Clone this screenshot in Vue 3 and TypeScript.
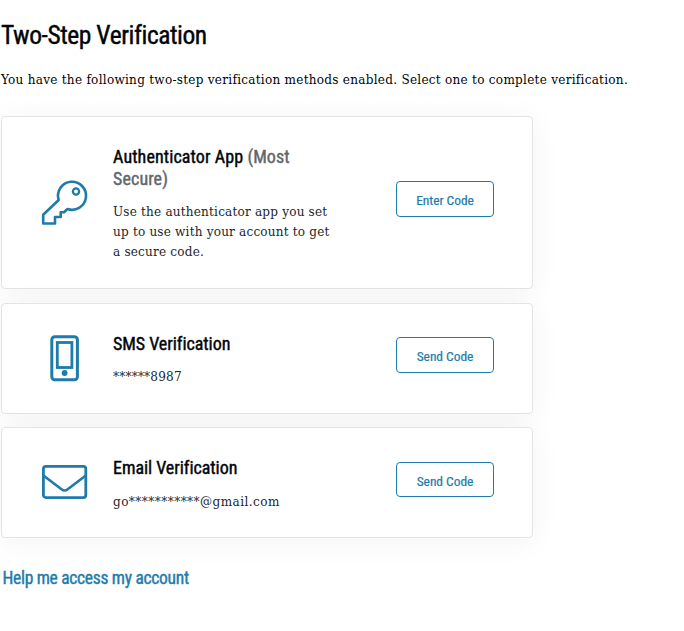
<script setup lang="ts">
interface Method {
  id: string
  title: string
  note?: string
  detail: string
  action: string
}

const methods: Method[] = [
  {
    id: 'key',
    title: 'Authenticator App',
    note: '(Most Secure)',
    detail: 'Use the authenticator app you set up to use with your account to get a secure code.',
    action: 'Enter Code',
  },
  { id: 'sms', title: 'SMS Verification', detail: '******8987', action: 'Send Code' },
  { id: 'email', title: 'Email Verification', detail: 'go***********@gmail.com', action: 'Send Code' },
]
</script>

<template>
  <main class="page">
    <h1>Two-Step Verification</h1>
    <p class="intro">You have the following two-step verification methods enabled. Select one to complete verification.</p>
    <section class="methods">
      <article v-for="m in methods" :key="m.id" class="card" :class="m.id">
        <svg class="icon" viewBox="0 0 48 48" fill="none" stroke="#1f7ba9" stroke-width="3" stroke-linejoin="round">
          <template v-if="m.id === 'key'">
            <path d="M17.700 21A14 14 0 1 1 26.500 30L23 33.300H19.700V38H14V44.500H2.200V35.800Z" stroke-width="2.600" />
            <circle cx="35" cy="12.500" r="3.100" stroke-width="2.300" />
          </template>
          <template v-else-if="m.id === 'sms'">
            <rect x="10.800" y="1.700" width="25.600" height="43" rx="3" />
            <rect x="16.300" y="7.500" width="14.600" height="25" stroke-width="2.800" stroke-linejoin="miter" />
            <circle cx="23.600" cy="38" r="2.900" fill="#1f7ba9" stroke="none" />
          </template>
          <template v-else>
            <rect x="2.400" y="7.400" width="42.400" height="31.200" rx="2.500" stroke-width="2.800" />
            <path d="M2.400 16.500L20.500 30.300Q23.600 32.700 26.700 30.300L44.800 16.500" stroke-width="2.600" />
          </template>
        </svg>
        <div class="copy">
          <h2>{{ m.title }} <span v-if="m.note">{{ m.note }}</span></h2>
          <p>{{ m.detail }}</p>
        </div>
        <button type="button">{{ m.action }}</button>
      </article>
    </section>
    <a class="help">Help me access my account</a>
  </main>
</template>

<style>
body {
  background: #fff;
}
</style>

<style scoped>
.page {
  box-sizing: border-box;
  height: 631px;
  padding: 18px 0 0 1px;
  overflow: hidden;
  color: #000508;
  font-family: "DejaVu Serif Condensed", "DejaVu Serif", serif;
  font-stretch: condensed;
}
h1, h2, button, .help {
  font-family: "Roboto", sans-serif;
  font-stretch: condensed;
  font-weight: 400;
  -webkit-text-stroke: 0.4px currentColor;
}
h1 {
  margin: 0;
  font-size: 25.5px;
  line-height: 34px;
  letter-spacing: -0.45px;
}
.intro {
  margin: 18px 0 26px;
  font-size: 13.4px;
  line-height: 20px;
  letter-spacing: 0.27px;
  white-space: nowrap;
}
.methods {
  display: flex;
  flex-direction: column;
  gap: 14px;
  width: 532px;
}
.card {
  box-sizing: border-box;
  display: grid;
  grid-template-columns: 48px 1fr 98px;
  column-gap: 24px;
  align-items: center;
  height: 111px;
  padding: 0 38px 0 39px;
  border: 1px solid #e4e4e4;
  border-radius: 4px;
  background: #fff;
  box-shadow: 0 4px 30px rgba(0, 0, 0, 0.05);
}
.card.key {
  height: 173px;
}
.card.email {
  margin-top: -1px;
}
.icon {
  width: 48px;
  height: 48px;
}
.copy {
  align-self: start;
  padding-top: 29px;
}
h2 {
  width: 195px;
  margin: 0;
  font-size: 18px;
  line-height: 22px;
  letter-spacing: -0.05px;
}
.key h2 {
  letter-spacing: 0.1px;
}
h2 span {
  color: #60666b;
}
.copy p {
  width: 225px;
  margin: 12px 0 0;
  color: #22262b;
  font-size: 13.4px;
  line-height: 20px;
  letter-spacing: 0.2px;
}
.email .copy p {
  margin-top: 13px;
  letter-spacing: 0.45px;
}
button {
  height: 36px;
  margin-bottom: 8px;
  padding: 3px 0 0;
  border: 1px solid #1f7ba9;
  border-radius: 4px;
  background: #fff;
  color: #1f7ba9;
  font-size: 13.5px;
  letter-spacing: -0.05px;
  -webkit-text-stroke-width: 0.2px;
}
.email button {
  height: 35px;
  margin-bottom: 7px;
}
.help {
  display: block;
  margin: 29px 0 0 1.500px;
  color: #1f7ba9;
  font-size: 17.5px;
  line-height: 22px;
  letter-spacing: -0.3px;
}
</style>
